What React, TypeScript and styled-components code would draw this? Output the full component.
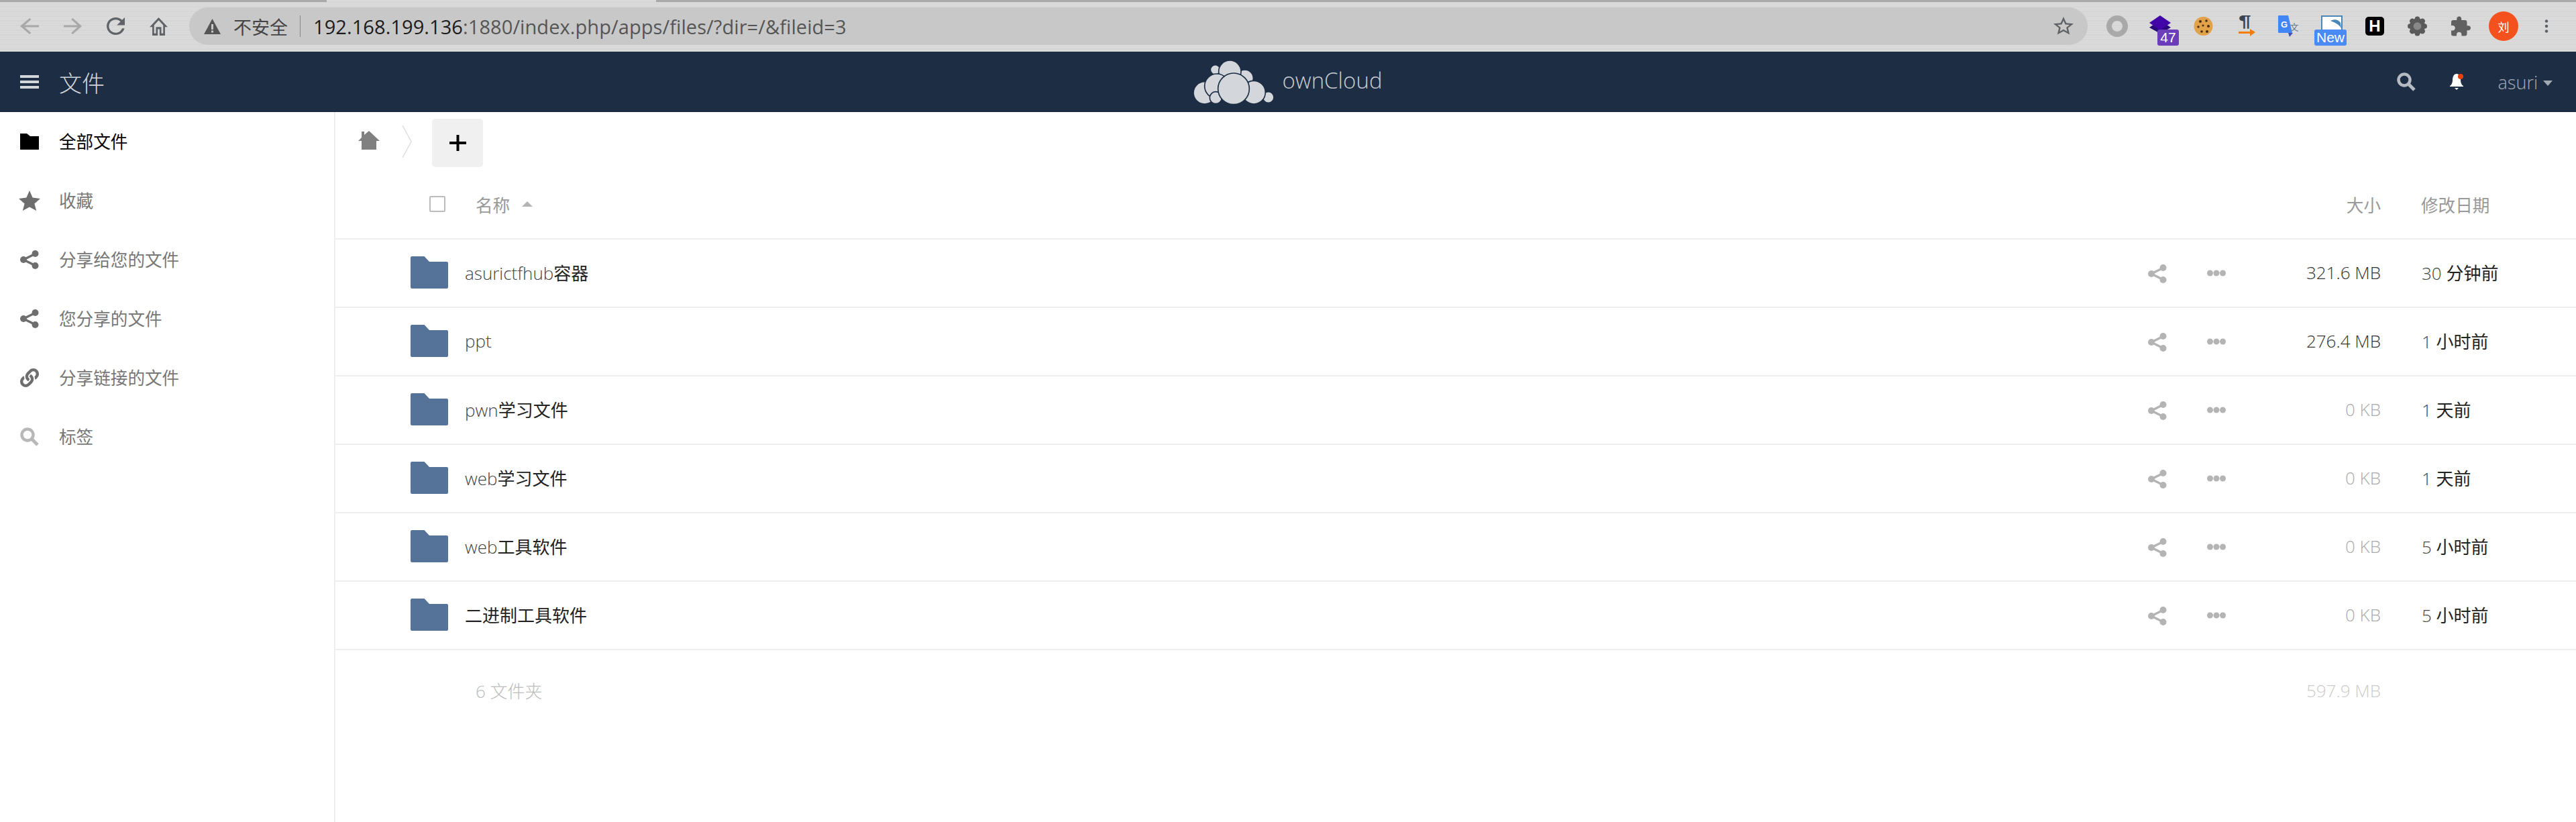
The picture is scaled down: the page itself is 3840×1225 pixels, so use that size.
import React from "react";
import styled, { createGlobalStyle } from "styled-components";
import { FaLink } from "react-icons/fa";

const Global = createGlobalStyle`
  html, body { margin: 0; padding: 0; background: #fff; }
  body { font-family: "Open Sans", "Noto Sans CJK SC", sans-serif; overflow: hidden; }
  * { box-sizing: border-box; }
`;

const Page = styled.div`display:flex;flex-direction:column;width:3840px;height:1225px;`;

/* browser chrome */
const Chrome = styled.div`
  height:77px;flex:none;display:flex;flex-direction:column;
  background:repeating-linear-gradient(180deg,#dadada 0,#dadada 2px,#d3d3d3 3px,#dcdcdc 5px,#d6d6d6 7px);
`;
const TabStrip = styled.div`height:3px;flex:none;display:flex;`;
const TabLine = styled.div<{ $w?: number }>`
  height:3px;background:#a9a9a9;
  ${(p) => (p.$w ? `width:${p.$w}px;` : "flex:1;")}
`;
const TabGap = styled.div`width:491px;flex:none;`;
const ToolRow = styled.div`flex:1;display:flex;align-items:center;padding:0 0 2px 30px;`;
const NavBtn = styled.svg<{ $ml?: number; $c: string }>`
  flex:none;margin-left:${(p) => p.$ml ?? 0}px;fill:${(p) => p.$c};
`;
const Pill = styled.div`
  flex:none;width:2830px;height:56px;margin-left:32px;border-radius:28px;background:#c8c8c8;
  display:flex;align-items:center;padding:0 21px 0 22px;
`;
const Insecure = styled.span`
  margin-left:19px;font:400 27px "Noto Sans CJK SC",sans-serif;color:#444;width:85px;white-space:nowrap;
`;
const UrlSep = styled.div`width:1px;height:32px;background:#888;margin-left:14px;`;
const Url = styled.div`
  margin-left:19px;font:400 29px "Open Sans",sans-serif;letter-spacing:.08px;color:#555;flex:1;white-space:nowrap;
`;
const UrlHost = styled.span`color:#1c1c1c;`;
const ExtSlot = styled.div<{ $w: number; $ml: number }>`
  position:relative;flex:none;height:32px;width:${(p) => p.$w}px;margin-left:${(p) => p.$ml}px;
  display:flex;align-items:center;justify-content:center;
`;
const ExtBadge = styled.span<{ $bg: string; $l: number; $w: number }>`
  position:absolute;left:${(p) => p.$l}px;top:21px;width:${(p) => p.$w}px;height:24px;border-radius:3px;
  background:${(p) => p.$bg};color:#fff;font:400 21px "Liberation Sans",sans-serif;
  display:flex;align-items:center;justify-content:center;
`;
const ParaMark = styled.span`
  position:absolute;left:0;top:-3px;font:700 24px "Liberation Sans",sans-serif;color:#37474f;line-height:24px;
  transform:scaleX(1.4);transform-origin:left center;
`;
const HBadge = styled.div`
  width:28px;height:28px;border-radius:5px;background:#000;color:#fff;
  font:900 24px "Liberation Sans",sans-serif;display:flex;align-items:center;justify-content:center;
`;
const Avatar = styled.div`
  flex:none;width:44px;height:44px;border-radius:50%;background:#f4511e;color:#fff;margin-left:27px;
  font:400 17px "Noto Sans CJK SC",sans-serif;display:flex;align-items:center;justify-content:center;
`;

/* ownCloud header */
const Header = styled.header`
  height:90px;flex:none;background:#1d2d44;display:grid;grid-template-columns:1fr auto 1fr;align-items:center;
`;
const HeadLeft = styled.div`display:flex;align-items:center;padding-left:30px;`;
const HeadTitle = styled.span`
  margin-left:30px;font:300 34px "Noto Sans CJK SC",sans-serif;color:#d2d5da;
`;
const Logo = styled.div`display:flex;align-items:center;`;
const LogoText = styled.span`
  margin-left:12px;font:300 33px "Open Sans",sans-serif;color:#c6cad0;position:relative;top:-3px;
`;
const HeadRight = styled.div`display:flex;align-items:center;justify-content:flex-end;padding-right:35px;`;
const BellIcon = styled.svg`margin-left:50px;flex:none;`;
const UserName = styled.span`margin-left:51px;font:300 27px "Open Sans",sans-serif;color:#a5abb4;`;
const Caret = styled.div`
  margin-left:8px;width:0;height:0;border-left:7px solid transparent;border-right:7px solid transparent;
  border-top:8px solid #a5abb4;margin-top:3px;
`;

/* body */
const Body = styled.div`flex:1;display:flex;min-height:0;`;
const Sidebar = styled.nav`flex:none;width:500px;border-right:2px solid #eee;display:flex;flex-direction:column;`;
const NavItem = styled.div<{ $active?: boolean }>`
  height:88px;display:flex;align-items:center;padding-left:30px;gap:30px;
  font:400 25.6px "Noto Sans CJK SC",sans-serif;color:${(p) => (p.$active ? "#000" : "#777")};
`;
const NavLabel = styled.span`margin-top:-4px;`;
const NavIcon = styled.div`width:28px;flex:none;display:flex;justify-content:center;`;
const StarIcon = styled.svg`flex:none;`;
const Main = styled.main`flex:1;min-width:0;display:flex;flex-direction:column;`;
const Crumbs = styled.div`height:88px;flex:none;display:flex;align-items:flex-start;padding:10px 0 0 34px;`;
const HomeIcon = styled.svg`margin-top:18px;fill:#808080;`;
const CrumbChevron = styled.svg`margin:10px 0 0 33px;`;
const AddBtn = styled.div`
  margin-left:30px;width:76px;height:72px;border-radius:5px;background:#f0f0f0;
  display:flex;align-items:center;justify-content:center;
`;
const HeadRow = styled.div`
  height:102px;flex:none;border-bottom:2px solid #eee;display:flex;align-items:center;padding:0 0 2px 140px;
  font:400 25.6px "Noto Sans CJK SC",sans-serif;color:#999;
`;
const Check = styled.div`width:24px;height:24px;border:2px solid #bbb;border-radius:2px;flex:none;`;
const NameLabel = styled.span`margin-left:45px;`;
const SortArrow = styled.div`
  margin-left:18px;width:0;height:0;border-left:8px solid transparent;border-right:8px solid transparent;
  border-bottom:8px solid #b4b4b4;flex:none;
`;
const HeadSpacer = styled.div`flex:1;`;
const SizeLabel = styled.span`width:130px;text-align:right;`;
const DateLabel = styled.span`margin-left:60px;width:231px;`;
const Row = styled.div`
  height:102px;flex:none;border-bottom:2px solid #eee;display:flex;align-items:center;padding:0 0 2px 112px;
`;
const FolderSvg = styled.svg`flex:none;fill:#557399;margin-left:0;`;
const FileName = styled.div`
  flex:1;margin-left:25px;font:400 26px "Open Sans","Noto Sans CJK SC",sans-serif;color:#222;
`;
const Latin = styled.span`color:#444;font-weight:300;`;
const ShareAct = styled.div`flex:none;margin-top:4px;display:flex;`;
const MoreAct = styled.svg`flex:none;margin:2px 0 0 60px;fill:#b4b4b4;`;
const SizeCell = styled.div<{ $empty?: boolean }>`
  width:231px;text-align:right;font:300 26px "Open Sans",sans-serif;color:${(p) => (p.$empty ? "#aaa" : "#333")};
`;
const DateCell = styled.div`
  margin-left:61px;width:230px;font:400 26px "Open Sans","Noto Sans CJK SC",sans-serif;color:#222;
`;
const Summary = styled.div`
  height:124px;display:flex;align-items:center;padding:0 0 4px 209px;font:300 26px "Open Sans","Noto Sans CJK SC",sans-serif;color:#bbb;
`;
const SummaryName = styled.div`flex:1;`;
const SummarySize = styled.div`width:231px;text-align:right;margin-right:291px;color:#ccc;`;

const Share = ({ c }: { c: string }) => (
  <svg width={28} height={28} viewBox="0 0 28 28" fill={c} stroke={c}>
    <path d="M23 5 5 14l18 9" fill="none" strokeWidth="3.5" />
    <circle cx="22.5" cy="5" r="5" stroke="none" />
    <circle cx="5" cy="14" r="5" stroke="none" />
    <circle cx="22.5" cy="23" r="5" stroke="none" />
  </svg>
);
const Mag = ({ c, w = 28, h = 28 }: { c: string; w?: number; h?: number }) => (
  <svg width={w} height={h} viewBox="0 0 28 28" fill="none" stroke={c}>
    <circle cx="11" cy="11" r="8.5" strokeWidth="4.5" />
    <path d="m17 17 9 9" strokeWidth="5" />
  </svg>
);

/* Latin runs render thin and grey next to the CJK glyphs */
const Mixed = ({ text }: { text: string }) => (
  <>
    {text.split(/([A-Za-z0-9]+)/).map((part, i) =>
      i % 2 ? <Latin key={i}>{part}</Latin> : part,
    )}
  </>
);

const rows = [
  ["asurictfhub容器", "321.6 MB", "30 分钟前", false],
  ["ppt", "276.4 MB", "1 小时前", false],
  ["pwn学习文件", "0 KB", "1 天前", true],
  ["web学习文件", "0 KB", "1 天前", true],
  ["web工具软件", "0 KB", "5 小时前", true],
  ["二进制工具软件", "0 KB", "5 小时前", true],
] as const;

const cloud = [
  [338, 97, 22], [470, 135, 38], [403, 105, 50], [575, 220, 25], [290, 200, 50],
  [510, 198, 52], [345, 170, 55], [340, 222, 27], [420, 182, 70],
];

export default function App() {
  return (
    <Page>
      <Global />
      <Chrome>
        <TabStrip>
          <TabLine $w={487} />
          <TabGap />
          <TabLine />
        </TabStrip>
        <ToolRow>
          <NavBtn $c="#a8a8a8" width="28" height="24" viewBox="4 4 16 16" preserveAspectRatio="none">
            <path d="M20 11H7.83l5.59-5.59L12 4l-8 8 8 8 1.41-1.41L7.83 13H20v-2z" />
          </NavBtn>
          <NavBtn $c="#a8a8a8" $ml={37} width="27" height="24" viewBox="4 4 16 16" preserveAspectRatio="none">
            <path d="m12 4-1.41 1.41L16.17 11H4v2h12.17l-5.58 5.59L12 20l8-8z" />
          </NavBtn>
          <NavBtn $c="#5f6368" $ml={37} width="27" height="26" viewBox="4 4 16 16" preserveAspectRatio="none">
            <path d="M17.65 6.35C16.2 4.9 14.21 4 12 4c-4.42 0-7.99 3.58-7.99 8s3.57 8 7.99 8c3.73 0 6.84-2.55 7.73-6h-2.08c-.82 2.33-3.04 4-5.65 4-3.31 0-6-2.69-6-6s2.69-6 6-6c1.66 0 3.14.69 4.22 1.78L13 11h7V4l-2.35 2.35z" />
          </NavBtn>
          <NavBtn $c="#5f6368" $ml={37} width="27" height="27" viewBox="2 3 20 17" preserveAspectRatio="none">
            <path d="M12 5.69l5 4.5V18h-2v-6H9v6H7v-7.81l5-4.5M12 3L2 12h3v8h6v-6h2v6h6v-8h3L12 3z" />
          </NavBtn>
          <Pill>
            <svg width="25" height="23" viewBox="0 0 25 23">
              <path d="M12.5 0 25 23H0z" fill="#555" />
              <rect x="11" y="8" width="3" height="8" fill="#c8c8c8" />
              <rect x="11" y="17.5" width="3" height="3" fill="#c8c8c8" />
            </svg>
            <Insecure>不安全</Insecure>
            <UrlSep />
            <Url>
              <UrlHost>192.168.199.136</UrlHost>:1880/index.php/apps/files/?dir=/&amp;fileid=3
            </Url>
            <svg width="30" height="28" viewBox="2 2 20 20" fill="#5f6368" preserveAspectRatio="none">
              <path d="m22 9.24-7.19-.62L12 2 9.19 8.63 2 9.24l5.46 4.73L5.82 21 12 17.27 18.18 21l-1.63-7.03L22 9.24zM12 15.4l-3.76 2.27 1-4.28-3.32-2.88 4.38-.38L12 6.1l1.71 4.04 4.38.38-3.32 2.88 1 4.28L12 15.4z" />
            </svg>
          </Pill>
          <ExtSlot $w={32} $ml={28}>
            <svg width="32" height="32" viewBox="0 0 32 32"><circle cx="16" cy="16" r="12" fill="none" stroke="#a9a9a9" strokeWidth="8" /></svg>
          </ExtSlot>
          <ExtSlot $w={32} $ml={32}>
            <svg width="32" height="32" viewBox="0 0 32 32">
              <path d="m16 16 16 11-16 9L0 27z" fill="#2a0a7a" transform="translate(0 -9)" />
              <path d="M16 0 32 11 16 22 0 11z" fill="#4205a8" />
            </svg>
            <ExtBadge $bg="#6b3dbb" $l={12} $w={32}>47</ExtBadge>
          </ExtSlot>
          <ExtSlot $w={29} $ml={34}>
            <svg width="29" height="28" viewBox="0 0 29 28">
              <circle cx="14.5" cy="14" r="14" fill="#e2a24a" />
              <g fill="#4a2c14">
                <circle cx="10" cy="7" r="2" /><circle cx="19" cy="6" r="1.8" /><circle cx="7" cy="15" r="1.7" />
                <circle cx="14" cy="13" r="1.5" /><circle cx="22" cy="14" r="2" /><circle cx="12" cy="22" r="1.8" /><circle cx="20" cy="22" r="2" />
              </g>
            </svg>
          </ExtSlot>
          <ExtSlot $w={25} $ml={38}>
            <ParaMark>¶</ParaMark>
            <svg width="25" height="32" viewBox="0 0 25 32">
              <path d="M0 24h17v-4l8 5-8 6v-4H0z" fill="#f57c00" />
            </svg>
          </ExtSlot>
          <ExtSlot $w={32} $ml={34}>
            <svg width="32" height="32" viewBox="0 0 32 32">
              <path d="M15 6h17v20H20z" fill="#dcdcdc" />
              <text x="24" y="22" fontFamily="Noto Sans CJK SC, sans-serif" fontSize="13" fill="#607d8b" textAnchor="middle">文</text>
              <path d="M1 0h14l6 26H1a1 1 0 0 1-1-1V1a1 1 0 0 1 1-1z" fill="#4285f4" />
              <path d="m15 26h7l-5 6z" fill="#3f51b5" />
              <text x="9" y="18" fontFamily="Liberation Sans, sans-serif" fontSize="13" fontWeight="700" fill="#fff" textAnchor="middle">G</text>
            </svg>
          </ExtSlot>
          <ExtSlot $w={32} $ml={32}>
            <svg width="32" height="32" viewBox="0 0 32 32">
              <rect x="0" y="0" width="32" height="24" fill="#4a86b8" />
              <rect x="2" y="2" width="28" height="22" fill="#fff" />
              <path d="M14 8c6-3 12-2 15 3l1 8c-3-5-8-8-16-11z" fill="#4a86b8" />
            </svg>
            <ExtBadge $bg="#4a8af4" $l={-10} $w={48}>New</ExtBadge>
          </ExtSlot>
          <ExtSlot $w={28} $ml={34}><HBadge>H</HBadge></ExtSlot>
          <ExtSlot $w={29} $ml={35}>
            <svg width="30" height="30" viewBox="0 0 30 30">
              <g fill="#5a5a5a">
                <circle cx="15" cy="15" r="12" />
                {[0, 45, 90, 135, 180, 225, 270, 315].map((a) => (
                  <circle key={a} cx="15" cy="4" r="4" transform={`rotate(${a} 15 15)`} />
                ))}
              </g>
              <circle cx="15" cy="15" r="6" fill="#888" />
            </svg>
          </ExtSlot>
          <ExtSlot $w={29} $ml={36}>
            <svg width="32" height="32" viewBox="2 1 21 21" fill="#606060">
              <path d="M20.5 11H19V7c0-1.1-.9-2-2-2h-4V3.5C13 2.12 11.88 1 10.5 1S8 2.12 8 3.5V5H4c-1.1 0-1.99.9-1.99 2v3.8H3.5c1.49 0 2.7 1.21 2.7 2.7s-1.21 2.7-2.7 2.7H2V20c0 1.1.9 2 2 2h3.8v-1.5c0-1.49 1.21-2.7 2.7-2.7 1.49 0 2.7 1.21 2.7 2.7V22H17c1.1 0 2-.9 2-2v-4h1.5c1.38 0 2.5-1.12 2.5-2.5S21.88 11 20.5 11z" />
            </svg>
          </ExtSlot>
          <Avatar>刘</Avatar>
          <ExtSlot $w={6} $ml={39}>
            <svg width="8" height="28" viewBox="0 0 8 28" fill="#5f6368">
              <circle cx="4" cy="4" r="3" /><circle cx="4" cy="14" r="3" /><circle cx="4" cy="24" r="3" />
            </svg>
          </ExtSlot>
        </ToolRow>
      </Chrome>

      <Header>
        <HeadLeft>
          <svg width="28" height="20" viewBox="0 0 28 20" fill="#d2d5da">
            <rect width="28" height="4" /><rect y="8" width="28" height="4" /><rect y="16" width="28" height="4" />
          </svg>
          <HeadTitle>文件</HeadTitle>
        </HeadLeft>
        <Logo>
          <svg width="120" height="65" viewBox="240 55 360 195">
            {cloud.map(([cx, cy, r]) => (
              <circle key={`${cx}-${cy}`} cx={cx} cy={cy} r={r} fill="#d3d7dc" stroke="#1d2d44" strokeWidth="5" />
            ))}
          </svg>
          <LogoText>ownCloud</LogoText>
        </Logo>
        <HeadRight>
          <Mag c="#b6bac1" w={30} h={28} />
          <BellIcon width="21" height="24" viewBox="0 0 21 24">
            <path d="M10 0c4 0 6 4 6 9 0 5 2 8 4 9v1H0v-1c2-1 4-4 4-9s2-9 6-9z" fill="#fff" />
            <path d="M7 21h6l-3 3z" fill="#fff" />
            <circle cx="16" cy="4" r="4" fill="#e8400c" />
          </BellIcon>
          <UserName>asuri</UserName>
          <Caret />
        </HeadRight>
      </Header>

      <Body>
        <Sidebar>
          <NavItem $active>
            <NavIcon>
              <svg width="28" height="24" viewBox="0 0 28 24"><path d="M0 0h10l5 4h13v20H0z" fill="#000" /></svg>
            </NavIcon>
            <NavLabel>全部文件</NavLabel>
          </NavItem>
          <NavItem>
            <NavIcon>
              <StarIcon width="32" height="30" viewBox="0 0 32 30">
                <path d="m16 0 4.6 10.6L32 12l-8.600 7.400L26.200 30 16 24.500 5.800 30l2.800-10.600L0 12l11.400-1.400z" fill="#6e6e6e" />
              </StarIcon>
            </NavIcon>
            <NavLabel>收藏</NavLabel>
          </NavItem>
          <NavItem><NavIcon><Share c="#6e6e6e" /></NavIcon><NavLabel>分享给您的文件</NavLabel></NavItem>
          <NavItem><NavIcon><Share c="#6e6e6e" /></NavIcon><NavLabel>您分享的文件</NavLabel></NavItem>
          <NavItem>
            <NavIcon><FaLink size={28} color="#6e6e6e" /></NavIcon>
            <NavLabel>分享链接的文件</NavLabel>
          </NavItem>
          <NavItem><NavIcon><Mag c="#b8b8b8" /></NavIcon><NavLabel>标签</NavLabel></NavItem>
        </Sidebar>
        <Main>
          <Crumbs>
            <HomeIcon width="32" height="28" viewBox="0 0 32 28">
              <path d="M16 0 32 15h-5v13H5V15H0l5-5V1h4v5z" />
            </HomeIcon>
            <CrumbChevron width="15" height="48" viewBox="0 0 15 48" fill="none" stroke="#ddd" strokeWidth="1.500">
              <path d="m1 0 13 24L1 48" />
            </CrumbChevron>
            <AddBtn>
              <svg width="25" height="24" viewBox="0 0 25 24" fill="#000">
                <rect x="10.500" width="4" height="24" /><rect y="10" width="25" height="4" />
              </svg>
            </AddBtn>
          </Crumbs>
          <HeadRow>
            <Check />
            <NameLabel>名称</NameLabel>
            <SortArrow />
            <HeadSpacer />
            <SizeLabel>大小</SizeLabel>
            <DateLabel>修改日期</DateLabel>
          </HeadRow>
          {rows.map(([name, size, date, empty]) => (
            <Row key={name}>
              <FolderSvg width="56" height="48" viewBox="0 0 56 48">
                <path d="M2 0h18.500l7.500 8h26a2 2 0 0 1 2 2v36a2 2 0 0 1-2 2H2a2 2 0 0 1-2-2V2a2 2 0 0 1 2-2z" />
              </FolderSvg>
              <FileName><Mixed text={name} /></FileName>
              <ShareAct><Share c="#b4b4b4" /></ShareAct>
              <MoreAct width="28" height="10" viewBox="0 0 28 10">
                <circle cx="4.500" cy="5" r="4.500" /><circle cx="14" cy="5" r="4.500" /><circle cx="23.500" cy="5" r="4.500" />
              </MoreAct>
              <SizeCell $empty={empty}>{size}</SizeCell>
              <DateCell><Mixed text={date} /></DateCell>
            </Row>
          ))}
          <Summary>
            <SummaryName>6 文件夹</SummaryName>
            <SummarySize>597.9 MB</SummarySize>
          </Summary>
        </Main>
      </Body>
    </Page>
  );
}
